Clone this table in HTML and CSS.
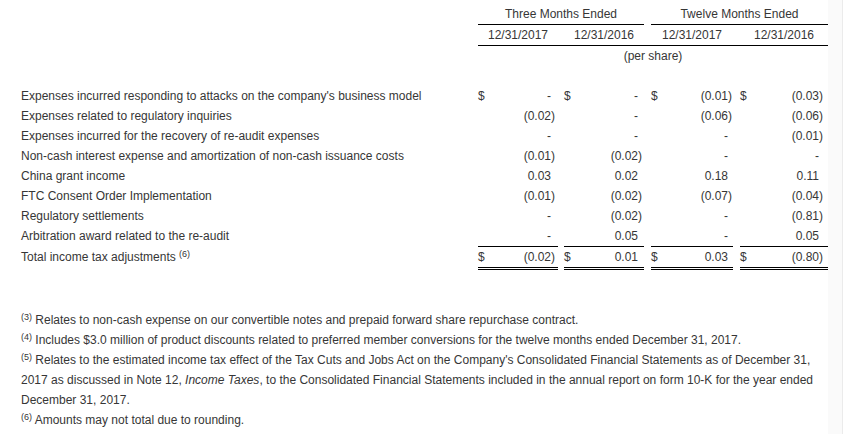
FILE: index.html
```html
<!DOCTYPE html>
<html lang="en">
<head>
<meta charset="utf-8">
<title>Income tax adjustments</title>
<link rel="stylesheet" href="styles.css">
</head>
<body>
<div class="page">
  <main class="content">
    <div class="fin">
      <div></div>
      <div class="hd span3">Three Months Ended</div>
      <div></div>
      <div class="hd span3">Twelve Months Ended</div>

      <div></div>
      <div class="date">12/31/2017</div>
      <div class="date"></div>
      <div class="date">12/31/2016</div>
      <div class="date"></div>
      <div class="date">12/31/2017</div>
      <div class="date"></div>
      <div class="date">12/31/2016</div>

      <div></div>
      <div class="pershare">(per share)</div>

      <div class="blank"></div>

      <div class="lbl">Expenses incurred responding to attacks on the company's business model</div>
      <div class="num c1"><span class="cur">$</span><span class="v pos">-</span></div><div></div>
      <div class="num c2"><span class="cur">$</span><span class="v pos">-</span></div><div></div>
      <div class="num c3"><span class="cur">$</span><span class="v">(0.01)</span></div><div></div>
      <div class="num c4"><span class="cur">$</span><span class="v">(0.03)</span></div>

      <div class="lbl">Expenses related to regulatory inquiries</div>
      <div class="num c1"><span class="v">(0.02)</span></div><div></div>
      <div class="num c2"><span class="v pos">-</span></div><div></div>
      <div class="num c3"><span class="v">(0.06)</span></div><div></div>
      <div class="num c4"><span class="v">(0.06)</span></div>

      <div class="lbl">Expenses incurred for the recovery of re-audit expenses</div>
      <div class="num c1"><span class="v pos">-</span></div><div></div>
      <div class="num c2"><span class="v pos">-</span></div><div></div>
      <div class="num c3"><span class="v pos">-</span></div><div></div>
      <div class="num c4"><span class="v">(0.01)</span></div>

      <div class="lbl">Non-cash interest expense and amortization of non-cash issuance costs</div>
      <div class="num c1"><span class="v">(0.01)</span></div><div></div>
      <div class="num c2"><span class="v">(0.02)</span></div><div></div>
      <div class="num c3"><span class="v pos">-</span></div><div></div>
      <div class="num c4"><span class="v pos">-</span></div>

      <div class="lbl">China grant income</div>
      <div class="num c1"><span class="v pos">0.03</span></div><div></div>
      <div class="num c2"><span class="v pos">0.02</span></div><div></div>
      <div class="num c3"><span class="v pos">0.18</span></div><div></div>
      <div class="num c4"><span class="v pos">0.11</span></div>

      <div class="lbl">FTC Consent Order Implementation</div>
      <div class="num c1"><span class="v">(0.01)</span></div><div></div>
      <div class="num c2"><span class="v">(0.02)</span></div><div></div>
      <div class="num c3"><span class="v">(0.07)</span></div><div></div>
      <div class="num c4"><span class="v">(0.04)</span></div>

      <div class="lbl">Regulatory settlements</div>
      <div class="num c1"><span class="v pos">-</span></div><div></div>
      <div class="num c2"><span class="v">(0.02)</span></div><div></div>
      <div class="num c3"><span class="v pos">-</span></div><div></div>
      <div class="num c4"><span class="v">(0.81)</span></div>

      <div class="lbl">Arbitration award related to the re-audit</div>
      <div class="num c1"><span class="v pos">-</span></div><div></div>
      <div class="num c2"><span class="v pos">0.05</span></div><div></div>
      <div class="num c3"><span class="v pos">-</span></div><div></div>
      <div class="num c4"><span class="v pos">0.05</span></div>

      <div class="lbl total-lbl">Total income tax adjustments <sup>(6)</sup></div>
      <div class="num c1 total"><span class="cur">$</span><span class="v">(0.02)</span></div><div></div>
      <div class="num c2 total"><span class="cur">$</span><span class="v pos">0.01</span></div><div></div>
      <div class="num c3 total"><span class="cur">$</span><span class="v pos">0.03</span></div><div></div>
      <div class="num c4 total"><span class="cur">$</span><span class="v">(0.80)</span></div>
    </div>

    <div class="notes">
      <p><sup>(3)</sup> Relates to non-cash expense on our convertible notes and prepaid forward share repurchase contract.</p>
      <p><sup>(4)</sup> Includes $3.0 million of product discounts related to preferred member conversions for the twelve months ended December 31, 2017.</p>
      <p><sup>(5)</sup> Relates to the estimated income tax effect of the Tax Cuts and Jobs Act on the Company's Consolidated Financial Statements as of December 31, 2017 as discussed in Note 12, <em>Income Taxes</em>, to the Consolidated Financial Statements included in the annual report on form 10-K for the year ended December 31, 2017.</p>
      <p><sup>(6)</sup> Amounts may not total due to rounding.</p>
    </div>
  </main>
  <div class="rail"></div>
</div>
</body>
</html>
```

FILE: styles.css
```css
html, body {
  margin: 0;
  padding: 0;
  background: #fff;
}

body {
  font-family: "Liberation Sans", Arial, sans-serif;
  font-size: 12px;
  color: #363636;
}

.page {
  display: flex;
  min-height: 434px;
}

.content {
  width: 807px;
  padding: 4px 0 0 21px;
}

.rail {
  width: 14px;
  background: #fafafa;
  border-right: 1px solid #ebebeb;
}

.fin {
  display: grid;
  grid-template-columns: 457px 80px 6px 80px 7px 82px 7px 88px;
  line-height: 20px;
}

.hd {
  text-align: center;
  border-bottom: 1px solid #000;
}

.span3 {
  grid-column: span 3;
}

.date {
  text-align: center;
  border-bottom: 1px solid #000;
}

.pershare {
  grid-column: span 7;
  text-align: center;
}

.blank {
  grid-column: 1 / -1;
  height: 20px;
}

.lbl {
  white-space: nowrap;
}

.num {
  display: flex;
  justify-content: space-between;
}

.num .v {
  margin-left: auto;
}

.num .pos {
  padding-right: 4px;
}

.c1 { padding-right: 3px; }
.c2 { padding-right: 2px; }
.c3 { padding-right: 1px; }
.c4 { padding-right: 5px; }

.total {
  border-top: 1px solid #000;
  border-bottom: 3px double #000;
}

.total-lbl {
  padding-top: 1px;
}

sup {
  font-size: 9px;
  line-height: 9px;
  vertical-align: 4px;
}

.notes {
  margin-top: 40px;
  line-height: 20px;
}

.notes p {
  margin: 0;
}
```
